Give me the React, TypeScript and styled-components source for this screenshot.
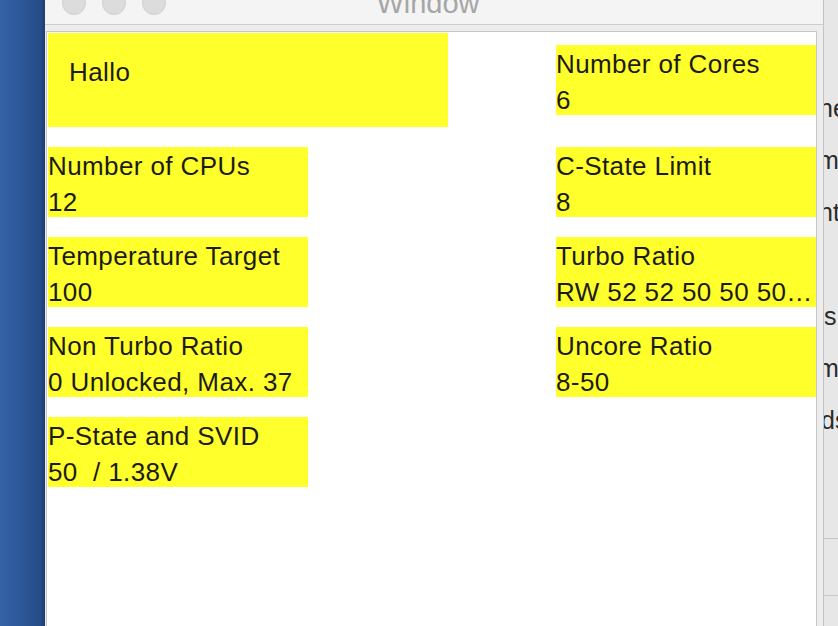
import React from "react";
import styled, { createGlobalStyle } from "styled-components";

const GlobalStyle = createGlobalStyle`
  html, body, #root {
    margin: 0;
    padding: 0;
    width: 838px;
    height: 626px;
    overflow: hidden;
  }
  body {
    font-family: "Liberation Sans", Arial, Helvetica, sans-serif;
  }
  * { box-sizing: border-box; }
`;

const Screen = styled.div`
  display: flex;
  width: 838px;
  height: 626px;
  overflow: hidden;
  font-family: "Liberation Sans", Arial, Helvetica, sans-serif;
`;

const Desktop = styled.div`
  flex: none;
  width: 45px;
  height: 100%;
  background: linear-gradient(to right, #3363a6 0%, #2c5596 55%, #274b88 90%, #1f3c70 100%);
`;

const Window = styled.div`
  flex: none;
  width: 779px;
  height: 100%;
  display: flex;
  flex-direction: column;
  background: #ededed;
  border-right: 1px solid #c2c2c2;
`;

const TitleBar = styled.div`
  flex: none;
  height: 25px;
  display: grid;
  grid-template-columns: 1fr auto 1fr;
  align-items: start;
  padding-right: 12px;
  background: #f4f4f4;
  border-bottom: 1px solid #cdcdcd;
  overflow: hidden;
`;

const Lights = styled.div`
  display: flex;
  gap: 16px;
  padding-left: 17px;
  margin-top: -9px;
`;

const Light = styled.span`
  display: block;
  width: 24px;
  height: 24px;
  border-radius: 50%;
  background: #dcdcdc;
  border: 1px solid #d0d0d0;
`;

const Title = styled.div`
  font-size: 29px;
  line-height: 6px;
  color: #a6a6a6;
  white-space: nowrap;
`;

const Body = styled.div`
  flex: 1;
  display: flex;
  padding: 6px 6px 0 1px;
  min-height: 0;
`;

const Content = styled.div`
  flex: 1;
  background: #ffffff;
  border: 1px solid #c6c6c6;
  border-bottom: none;
  padding: 1px;
  overflow: hidden;
`;

const Grid = styled.div`
  display: grid;
  grid-template-columns: 400px 260px;
  grid-template-rows: 94px repeat(4, 70px);
  column-gap: 108px;
  row-gap: 20px;
`;

const Cell = styled.div<{ $hero?: boolean }>`
  background: #ffff2c;
  color: #1c1c14;
  font-size: 26px;
  line-height: 36px;
  letter-spacing: 0.4px;
  white-space: pre;
  overflow: hidden;
  width: ${(p) => (p.$hero ? "400px" : "260px")};
  height: ${(p) => (p.$hero ? "94px" : "70px")};
  padding: ${(p) => (p.$hero ? "21px 0 0 21px" : "1px 0 0 0")};
  align-self: center;
`;

const Behind = styled.div`
  flex: 1;
  height: 100%;
  background: #e7e7e7;
  display: flex;
  flex-direction: column;
  padding-top: 82px;
  overflow: hidden;
`;

const BehindText = styled.div<{ $shift: number }>`
  height: 52px;
  line-height: 52px;
  font-size: 25px;
  color: #2b2b2b;
  white-space: nowrap;
  margin-left: ${(p) => p.$shift}px;
`;

const BehindRule = styled.div<{ $gap: number }>`
  height: 1px;
  background: #c9c9c9;
  margin-top: ${(p) => p.$gap}px;
`;

const labels: { text: string; hero?: boolean }[] = [
  { text: "Hallo", hero: true },
  { text: "Number of Cores\n6" },
  { text: "Number of CPUs\n12" },
  { text: "C-State Limit\n8" },
  { text: "Temperature Target\n100" },
  { text: "Turbo Ratio\nRW 52 52 50 50 50…" },
  { text: "Non Turbo Ratio\n0 Unlocked, Max. 37" },
  { text: "Uncore Ratio\n8-50" },
  { text: "P-State and SVID\n50  / 1.38V" },
];

const behindLines: { text: string; shift: number }[] = [
  { text: "ne", shift: -5 },
  { text: "m", shift: -6 },
  { text: "nt", shift: -5 },
  { text: "", shift: 0 },
  { text: "s", shift: 0 },
  { text: "m", shift: -6 },
  { text: "ds:", shift: -3 },
];

export default function App() {
  return (
    <>
      <GlobalStyle />
      <Screen>
        <Desktop />
        <Window>
          <TitleBar>
            <Lights>
              <Light />
              <Light />
              <Light />
            </Lights>
            <Title>Window</Title>
            <div />
          </TitleBar>
          <Body>
            <Content>
              <Grid>
                {labels.map((l, i) => (
                  <Cell key={i} $hero={l.hero}>
                    {l.text}
                  </Cell>
                ))}
              </Grid>
            </Content>
          </Body>
        </Window>
        <Behind>
          {behindLines.map((b, i) => (
            <BehindText key={i} $shift={b.shift}>
              {b.text}
            </BehindText>
          ))}
          <BehindRule $gap={92} />
          <BehindRule $gap={56} />
        </Behind>
      </Screen>
    </>
  );
}
